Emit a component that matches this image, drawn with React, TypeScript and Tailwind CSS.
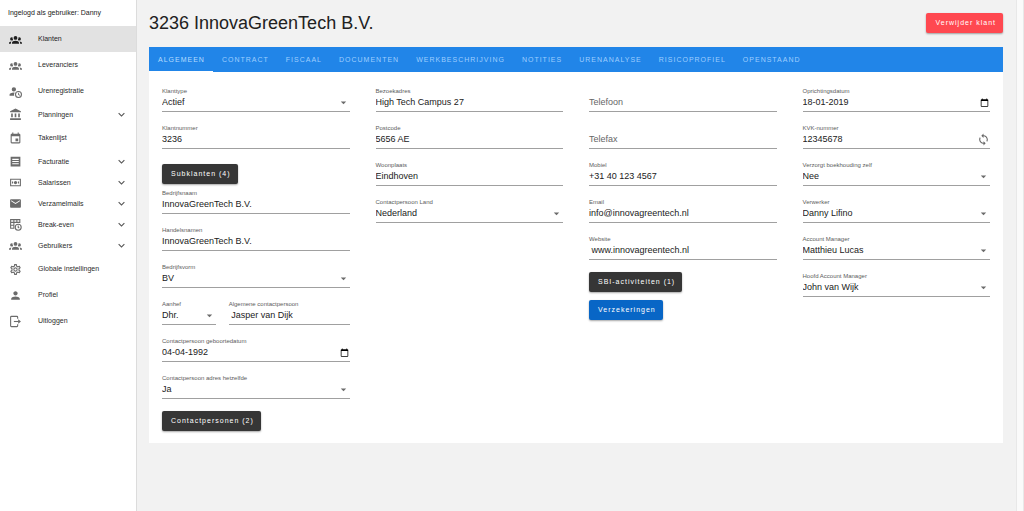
import { useId, useState, type ReactNode } from 'react';
import clsx from 'clsx';
import {
  MdAccountBalance,
  MdArrowDropDown,
  MdEmail,
  MdEvent,
  MdExpandMore,
  MdOutlineSettings,
  MdPerson,
  MdSync,
} from 'react-icons/md';

const GroupIcon = () => (
  <svg viewBox="0 0 24 24" className="size-[13px]" fill="currentColor" aria-hidden="true">
    <path d="M12,5.5A3.5,3.5 0 0,1 15.5,9A3.5,3.5 0 0,1 12,12.5A3.5,3.5 0 0,1 8.5,9A3.5,3.5 0 0,1 12,5.5M5,8C5.56,8 6.08,8.15 6.53,8.42C6.38,9.85 6.8,11.27 7.66,12.38C7.16,13.34 6.16,14 5,14A3,3 0 0,1 2,11A3,3 0 0,1 5,8M19,8A3,3 0 0,1 22,11A3,3 0 0,1 19,14C17.84,14 16.84,13.34 16.34,12.38C17.2,11.27 17.62,9.85 17.47,8.42C17.92,8.15 18.44,8 19,8M5.5,18.25C5.5,16.18 8.41,14.5 12,14.5C15.59,14.5 18.5,16.18 18.5,18.25V20H5.5V18.25M0,20V18.5C0,17.11 1.89,15.94 4.45,15.6C3.86,16.28 3.5,17.22 3.5,18.25V20H0M24,20H20.5V18.25C20.5,17.22 20.14,16.28 19.55,15.6C22.11,15.94 24,17.11 24,18.5V20Z" />
  </svg>
);

const AccountClockIcon = () => (
  <svg viewBox="0 0 24 24" className="size-[13px]" fill="currentColor" aria-hidden="true">
    <path d="M9,4a4,4 0 1,1 0,8a4,4 0 0,1 0-8M9,14c.5,0 .9,0 1.300.1A7.500,7.500 0 0,0 9.600,20H1v-2c0-2.200 3.600-4 8-4z" />
    <path d="M17.500,11a6.500,6.500 0 1,0 0,13a6.500,6.500 0 0,0 0-13M17.500,13a4.500,4.500 0 1,1 0,9a4.500,4.500 0 0,1 0-9M16.700,14.200h1.500v3.100l2.200,1.300-.8,1.300-2.900-1.800z" fillRule="evenodd" />
  </svg>
);

const InvoiceIcon = () => (
  <svg viewBox="0 0 24 24" className="size-[13px]" fill="currentColor" aria-hidden="true">
    <path d="M3 3h18v18H3zM6 7v2h12V7zM6 11v2h12v-2zM6 15v2h12v-2z" fillRule="evenodd" />
  </svg>
);

const CashIcon = () => (
  <svg viewBox="0 0 24 24" className="size-[13px]" fill="currentColor" aria-hidden="true">
    <path d="M2 5h20v14H2zM4 7v10h16V7z" fillRule="evenodd" />
    <circle cx="12" cy="12" r="3" />
    <path d="M5.500 10h2v4h-2zM16.500 10h2v4h-2z" />
  </svg>
);

const TableClockIcon = () => (
  <svg viewBox="0 0 24 24" className="size-[13px]" fill="none" stroke="currentColor" strokeWidth="2" aria-hidden="true">
    <path d="M10 19H3V3h17v6M3 8h17M3 13.500h7M9 3v16M14.500 3v6" />
    <circle cx="17" cy="17" r="5.500" />
    <path d="M17 14v3.500l2 1" />
  </svg>
);

const LogoutIcon = () => (
  <svg viewBox="0 0 24 24" className="size-[13px]" fill="none" stroke="currentColor" strokeWidth="2" aria-hidden="true">
    <path d="M16 7V4a1.500 1.500 0 0 0-1.500-1.500h-10A1.500 1.500 0 0 0 3 4v16a1.500 1.500 0 0 0 1.500 1.500h10A1.500 1.500 0 0 0 16 20v-3" />
    <path d="M9 12h9" />
    <path d="M17 8l5 4-5 4z" fill="currentColor" stroke="none" />
  </svg>
);

const CalendarIcon = () => (
  <svg viewBox="0 0 24 24" className="size-[9px]" fill="currentColor" aria-hidden="true">
    <path d="M20 3h-1V1h-2v2H7V1H5v2H4c-1.100 0-2 .9-2 2v16c0 1.100.9 2 2 2h16c1.100 0 2-.9 2-2V5c0-1.100-.9-2-2-2zm0 18H4V8h16v13z" />
  </svg>
);

interface NavItem {
  label: string;
  icon: ReactNode;
  group?: boolean;
}

const navItems: NavItem[] = [
  { label: 'Klanten', icon: <GroupIcon /> },
  { label: 'Leveranciers', icon: <GroupIcon /> },
  { label: 'Urenregistratie', icon: <AccountClockIcon /> },
  { label: 'Planningen', icon: <MdAccountBalance className="size-[13px]" />, group: true },
  { label: 'Takenlijst', icon: <MdEvent className="size-[13px]" /> },
  { label: 'Facturatie', icon: <InvoiceIcon />, group: true },
  { label: 'Salarissen', icon: <CashIcon />, group: true },
  { label: 'Verzamelmails', icon: <MdEmail className="size-[13px]" />, group: true },
  { label: 'Break-even', icon: <TableClockIcon />, group: true },
  { label: 'Gebruikers', icon: <GroupIcon />, group: true },
  { label: 'Globale instellingen', icon: <MdOutlineSettings className="size-[13px]" /> },
  { label: 'Profiel', icon: <MdPerson className="size-[13px]" /> },
  { label: 'Uitloggen', icon: <LogoutIcon /> },
];

const tabs = [
  'ALGEMEEN',
  'CONTRACT',
  'FISCAAL',
  'DOCUMENTEN',
  'WERKBESCHRIJVING',
  'NOTITIES',
  'URENANALYSE',
  'RISICOPROFIEL',
  'OPENSTAAND',
];

const NavRow = ({ item, active }: { item: NavItem; active: boolean }) => {
  const className = clsx(
    'flex w-full items-center pr-2 pl-2 text-left text-[7px] leading-3',
    item.group ? 'h-[21px]' : 'h-[26px]',
    active ? 'bg-[#e2e2e2] text-[#1e1e1e]' : 'text-[#2c2c2c]',
  );
  const content = (
    <>
      <span
        className={clsx(
          'mr-4 flex w-[14px] shrink-0 justify-center',
          active ? 'text-[#1e1e1e]' : 'text-[#6b6b6b]',
        )}
      >
        {item.icon}
      </span>
      <span className="flex-1">{item.label}</span>
      {item.group && <MdExpandMore className="size-[13px] text-[#555555]" />}
    </>
  );

  return (
    <li>
      {item.group ? (
        <button type="button" className={className}>
          {content}
        </button>
      ) : (
        <a href="#" className={className}>
          {content}
        </a>
      )}
    </li>
  );
};

interface FieldProps {
  label: string;
  value: string;
  trailing?: ReactNode;
}

const TextField = ({ label, value, trailing }: FieldProps) => {
  const id = useId();
  return (
    <div className="mb-3 border-b border-[#a0a0a0] pb-[2px]">
      <label htmlFor={id} className="block text-[6px] leading-[8px] whitespace-nowrap text-[#5c5c5c]">
        {label}
      </label>
      <div className="flex h-[14px] items-center">
        <input id={id} type="text" defaultValue={value} className="w-full min-w-0 flex-1 text-[9px] leading-[14px] outline-none" />
        {trailing}
      </div>
    </div>
  );
};

// Empty field: the label rests on the input line
const EmptyField = ({ label }: { label: string }) => {
  const id = useId();
  return (
    <div className="mb-3 border-b border-[#a0a0a0] pt-2 pb-[2px]">
      <div className="flex h-[14px] items-center text-[9px] leading-[14px]">
        <label htmlFor={id} className="text-[#666666]">
          {label}
        </label>
        <input id={id} type="text" className="min-w-0 flex-1 outline-none" />
      </div>
    </div>
  );
};

const SelectField = ({ label, value }: FieldProps) => {
  const id = useId();
  return (
    <div className="mb-3 border-b border-[#a0a0a0] pb-[2px]">
      <label htmlFor={id} className="block text-[6px] leading-[8px] whitespace-nowrap text-[#5c5c5c]">
        {label}
      </label>
      <div className="flex h-[14px] items-center">
        <select id={id} defaultValue={value} className="min-w-0 flex-1 appearance-none text-[9px] leading-[14px] outline-none">
          <option>{value}</option>
        </select>
        <MdArrowDropDown className="pointer-events-none size-[13px] text-[#6b6b6b]" />
      </div>
    </div>
  );
};

const DateField = ({ label, value }: FieldProps) => (
  <TextField
    label={label}
    value={value}
    trailing={
      <button type="button" aria-label={label} className="pr-px text-black">
        <CalendarIcon />
      </button>
    }
  />
);

const Button = ({ children, className }: { children: ReactNode; className: string }) => (
  <button
    type="button"
    className={clsx(
      'h-5 rounded-[2px] pr-[7px] pl-[9px] text-[7px] leading-3 tracking-[1px] whitespace-nowrap text-white shadow-[0_1px_2px_rgba(0,0,0,0.35)]',
      className,
    )}
  >
    {children}
  </button>
);

export default function App() {
  const [activeTab, setActiveTab] = useState('ALGEMEEN');

  return (
    <div className="flex min-h-screen bg-[#f2f2f2] font-['Liberation_Sans',Arial,sans-serif] text-[#212121]">
      <aside className="w-[137px] shrink-0 border-r border-[#dcdcdc] bg-white">
        <p className="flex h-[26px] items-center pl-2 text-[7px]">Ingelogd als gebruiker: Danny</p>
        <nav>
          <ul>
            {navItems.map((item) => (
              <NavRow key={item.label} item={item} active={item.label === 'Klanten'} />
            ))}
          </ul>
        </nav>
      </aside>

      <main className="min-w-0 flex-1 pr-[13px] pl-3">
        <header className="flex h-[47px] items-center justify-between pb-[2px]">
          <h1 className="text-[18px] leading-6">3236 InnovaGreenTech B.V.</h1>
          <Button className="bg-[#ff4850]">Verwijder klant</Button>
        </header>

        <section className="bg-white">
          <div role="tablist" className="flex h-[25px] bg-[#2185e8]">
            {tabs.map((tab) => (
              <button
                key={tab}
                type="button"
                role="tab"
                aria-selected={tab === activeTab}
                onClick={() => setActiveTab(tab)}
                className={clsx(
                  'border-b pt-[2px] pr-2 pl-[9px] text-[7px] leading-3 tracking-[1px]',
                  tab === activeTab ? 'border-white text-[#b5dcff]' : 'border-transparent text-[#9fceff]',
                )}
              >
                {tab}
              </button>
            ))}
          </div>

          <form className="grid grid-cols-4 pt-[15px]">
            <div className="px-[13px]">
              <SelectField label="Klanttype" value="Actief" />
              <TextField label="Klantnummer" value="3236" />
              <div className="flex pt-[3px] pb-[5px]">
                <Button className="bg-[#363636]">Subklanten (4)</Button>
              </div>
              <TextField label="Bedrijfsnaam" value="InnovaGreenTech B.V." />
              <TextField label="Handelsnamen" value="InnovaGreenTech B.V." />
              <SelectField label="Bedrijfsvorm" value="BV" />
              <div className="grid grid-cols-[4fr_9fr] gap-x-[13px]">
                <SelectField label="Aanhef" value="Dhr." />
                <TextField label="Algemene contactpersoon" value=" Jasper van Dijk" />
              </div>
              <DateField label="Contactpersoon geboortedatum" value="04-04-1992" />
              <SelectField label="Contactpersoon adres hetzelfde" value="Ja" />
              <div className="flex pb-3">
                <Button className="bg-[#363636]">Contactpersonen (2)</Button>
              </div>
            </div>

            <div className="px-[13px]">
              <TextField label="Bezoekadres" value="High Tech Campus 27" />
              <TextField label="Postcode" value="5656 AE" />
              <TextField label="Woonplaats" value="Eindhoven" />
              <SelectField label="Contactpersoon Land" value="Nederland" />
            </div>

            <div className="px-[13px]">
              <EmptyField label="Telefoon" />
              <EmptyField label="Telefax" />
              <TextField label="Mobiel" value="+31 40 123 4567" />
              <TextField label="Email" value="info@innovagreentech.nl" />
              <TextField label="Website" value=" www.innovagreentech.nl" />
              <div className="flex flex-col items-start gap-2">
                <Button className="bg-[#363636]">SBI-activiteiten (1)</Button>
                <Button className="bg-[#0866c6]">Verzekeringen</Button>
              </div>
            </div>

            <div className="px-[13px]">
              <DateField label="Oprichtingsdatum" value="18-01-2019" />
              <TextField
                label="KVK-nummer"
                value="12345678"
                trailing={
                  <button type="button" aria-label="KVK-nummer" className="text-[#666666]">
                    <MdSync className="size-[13px]" />
                  </button>
                }
              />
              <SelectField label="Verzorgt boekhouding zelf" value="Nee" />
              <SelectField label="Verwerker" value="Danny Lifino" />
              <SelectField label="Account Manager" value="Matthieu Lucas" />
              <SelectField label="Hoofd Account Manager" value="John van Wijk" />
            </div>
          </form>
        </section>
      </main>

      <div className="w-2 shrink-0 border-x border-[#e8e8e8] bg-[#fafafa]" />
    </div>
  );
}
